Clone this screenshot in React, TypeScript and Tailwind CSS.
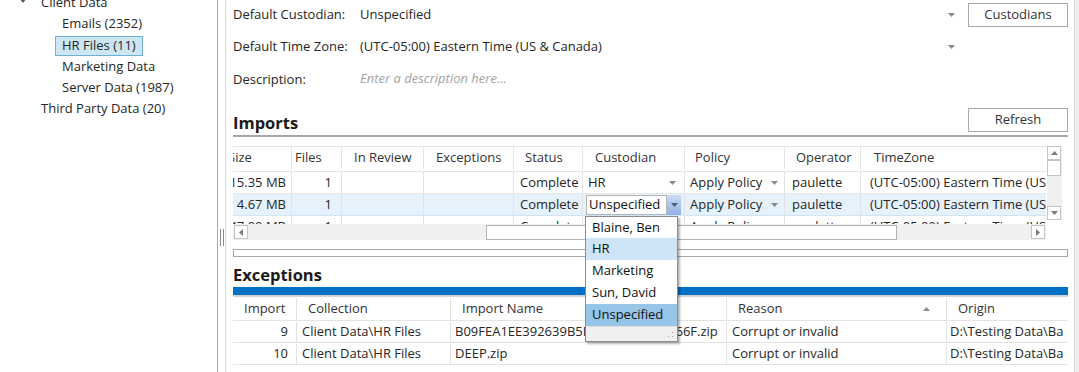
import React from 'react';
import clsx from 'clsx';

const Tri = ({ className = '' }: { className?: string }) => (
  <svg width="7" height="4" viewBox="0 0 7 4" className={className}>
    <polygon points="0,0 7,0 3.5,4" fill="currentColor" />
  </svg>
);

const TriUp = ({ className = '' }: { className?: string }) => (
  <svg width="7" height="4" viewBox="0 0 7 4" className={className}>
    <polygon points="0,4 7,4 3.5,0" fill="currentColor" />
  </svg>
);

const TriSide = ({ dir, className = '' }: { dir: 'l' | 'r'; className?: string }) => (
  <svg width="4" height="7" viewBox="0 0 4 7" className={className}>
    <polygon points={dir === 'l' ? '4,0 4,7 0,3.5' : '0,0 0,7 4,3.5'} fill="currentColor" />
  </svg>
);

const impCols = [
  { h: 'Size', w: 'w-[67px]', hp: 'pl-[3px]' },
  { h: 'Files', w: 'w-[50px]', hp: 'pl-[3px]' },
  { h: 'In Review', w: 'w-[82px]', hp: 'pl-[12px]' },
  { h: 'Exceptions', w: 'w-[90px]', hp: 'pl-[12px]' },
  { h: 'Status', w: 'w-[69px]', hp: 'pl-[11px]' },
  { h: 'Custodian', w: 'w-[102px]', hp: 'pl-[12px]' },
  { h: 'Policy', w: 'w-[100px]', hp: 'pl-[10px]' },
  { h: 'Operator', w: 'w-[76px]', hp: 'pl-[11px]' },
  { h: 'TimeZone', w: 'w-[260px]', hp: 'pl-[13px]' },
];

const excCols = [
  { h: 'Import', w: 'w-[64px]' },
  { h: 'Collection', w: 'w-[154px]' },
  { h: 'Import Name', w: 'w-[276px]' },
  { h: 'Reason', w: 'w-[220px]' },
  { h: 'Origin', w: 'w-[121px]' },
];

const Cell = ({ w, className, children }: { w: string; className?: string; children?: React.ReactNode }) => (
  <div className={clsx('h-full shrink-0 border-r border-[#e3e3e3] flex items-center whitespace-nowrap overflow-hidden', w, className)}>
    {children}
  </div>
);

function ImportRow({ size, sel, editing }: { size: string; sel?: boolean; editing?: boolean }) {
  return (
    <div className={clsx('flex h-[22px] border-b', sel ? 'bg-[#e5f1fb] border-[#cfe4f5]' : 'border-[#e6e6e6]')}>
      <Cell w="w-[67px]" className="justify-end pr-[5px]">{size}</Cell>
      <Cell w="w-[50px]" className="justify-end pr-[9px]">1</Cell>
      <Cell w="w-[82px]" />
      <Cell w="w-[90px]" />
      <Cell w="w-[69px]" className="pl-[6px]">Complete</Cell>
      {editing ? (
        <Cell w="w-[102px]" className="pl-[3px]">
          <div className="flex h-[20px] w-[95px]">
            <div className="flex-1 flex items-center bg-white border border-[#b4b4b4] pl-[2px] text-[#111]">Unspecified</div>
            <div className="w-[14px] flex items-center justify-center bg-gradient-to-b from-[#cddcf3] to-[#8fb0e2] text-[#4a5d7c]">
              <Tri />
            </div>
          </div>
        </Cell>
      ) : (
        <Cell w="w-[102px]" className="pl-[5px] pr-[8px] justify-between">
          <span>HR</span>
          <Tri className="text-[#8a8a8a]" />
        </Cell>
      )}
      <Cell w="w-[100px]" className="pl-[5px] pr-[6px] justify-between">
        <span>Apply Policy</span>
        <Tri className="text-[#8a8a8a]" />
      </Cell>
      <Cell w="w-[76px]" className="pl-[7px]">paulette</Cell>
      <Cell w="w-[260px]" className="pl-[9px]">(UTC-05:00) Eastern Time (US &amp; Canada)</Cell>
    </div>
  );
}

const ScrollBtn = ({ children }: { children: React.ReactNode }) => (
  <div className="w-[14px] h-[14px] border border-[#c4c4c4] bg-white flex items-center justify-center text-[#7a7a7a]">
    {children}
  </div>
);

export default function App() {
  return (
    <div
      className="relative w-[1079px] h-[372px] overflow-hidden bg-white flex text-[13px] text-[#262626]"
      style={{ fontFamily: '"Open Sans", "Noto Sans", sans-serif' }}
    >
      {/* tree */}
      <div className="w-[218px] shrink-0 border-r border-[#a8a8a8]">
        <div className="mt-[-8px] flex flex-col">
          <div className="h-[21px] flex items-center pl-[19px]">
            <svg width="8" height="5" viewBox="0 0 8 5" className="text-[#595959] mr-[14px] mt-[-4px]">
              <polygon points="0,0 8,0 4,5" fill="currentColor" />
            </svg>
            <span>Client Data</span>
          </div>
          <div className="h-[21px] flex items-center pl-[62px]">Emails (2352)</div>
          <div className="h-[22px] flex items-center pl-[55px] pt-[2px]">
            <div className="h-[20px] flex items-center px-[6px] bg-[#cde6f3] border border-[#6fafd9]">HR Files (11)</div>
          </div>
          <div className="h-[21px] flex items-center pl-[62px]">Marketing Data</div>
          <div className="h-[21px] flex items-center pl-[62px]">Server Data (1987)</div>
          <div className="h-[21px] flex items-center pl-[41px]">Third Party Data (20)</div>
        </div>
      </div>

      {/* splitter */}
      <div className="w-[7px] shrink-0 flex items-center justify-center">
        <div className="flex gap-[2px] mt-[102px]">
          <div className="w-px h-[17px] bg-[#8a8a8a]" />
          <div className="w-px h-[17px] bg-[#8a8a8a]" />
        </div>
      </div>

      {/* main */}
      <div className="w-[850px] shrink-0 border-l border-r border-[#d9d9d9] pl-[7px] pr-[6px] pt-[3px] flex flex-col">
        <div className="h-[24px] flex items-center">
          <div className="w-[127px] shrink-0">Default Custodian:</div>
          <div className="flex-1 flex items-center justify-between">
            <span>Unspecified</span>
            <Tri className="text-[#8a8a8a] mr-[5px]" />
          </div>
          <button className="ml-[8px] w-[100px] h-[24px] border border-[#a9a9a9] bg-white text-[#333]">Custodians</button>
        </div>
        <div className="mt-[8px] h-[24px] flex items-center">
          <div className="w-[127px] shrink-0">Default Time Zone:</div>
          <div className="flex-1 flex items-center justify-between">
            <span>(UTC-05:00) Eastern Time (US &amp; Canada)</span>
            <Tri className="text-[#8a8a8a] mr-[5px]" />
          </div>
          <div className="ml-[8px] w-[100px]" />
        </div>
        <div className="mt-[8px] h-[24px] flex items-center">
          <div className="w-[127px] shrink-0 pt-[2px]">Description:</div>
          <div className="italic text-[#a3a3a3]">Enter a description here...</div>
        </div>

        {/* imports */}
        <div className="mt-[17px] h-[29px] flex items-start justify-between border-b-2 border-[#a6a6a6]">
          <div className="pt-[4px] text-[16.5px] font-bold leading-[22px] text-[#1a1a1a]">Imports</div>
          <button className="w-[100px] h-[24px] border border-[#a9a9a9] bg-white text-[#333]">Refresh</button>
        </div>

        <div className="mt-[9px] mr-[6px] flex flex-col">
          <div className="flex h-[78px]">
            <div className="flex-1 overflow-hidden">
              <div className="ml-[-8px] flex h-[26px] pb-[2px] border-t border-b border-[#e3e3e3] text-[#333]">
                {impCols.map((c) => (
                  <Cell key={c.h} w={c.w} className={c.hp}>{c.h}</Cell>
                ))}
              </div>
              <div className="ml-[-8px]">
                <ImportRow size="15.35 MB" />
                <ImportRow size="4.67 MB" sel editing />
                <ImportRow size="47.09 MB" />
              </div>
            </div>
            <div className="w-[15px] ml-[1px] h-[74px] bg-[#f0f0f0] flex flex-col justify-between">
              <div className="flex flex-col">
                <ScrollBtn><TriUp /></ScrollBtn>
                <div className="w-[14px] h-[16px] border border-[#c4c4c4] bg-white" />
              </div>
              <ScrollBtn><Tri /></ScrollBtn>
            </div>
          </div>
          <div className="flex h-[16px]">
            <div className="flex-1 bg-[#f0f0f0] flex items-center px-px">
              <ScrollBtn><TriSide dir="l" /></ScrollBtn>
              <div className="ml-[238px] w-[411px] h-[15px] border border-[#b4b4b4] bg-white" />
              <div className="flex-1" />
              <ScrollBtn><TriSide dir="r" /></ScrollBtn>
            </div>
            <div className="w-[16px]" />
          </div>
        </div>

        <div className="mt-[9px] h-[8px] border border-[#a6a6a6]" />

        {/* exceptions */}
        <div className="mt-[7px] h-[22px] text-[16.5px] font-bold leading-[22px] text-[#1a1a1a]">Exceptions</div>
        <div className="mt-[1px] h-[8px] bg-[#0072c6]" />
        <div className="h-[2px] bg-[#d4d4d4]" />
        <div className="flex h-[24px] pt-px border-b border-[#e3e3e3] text-[#333]">
          {excCols.map((c) => (
            <Cell key={c.h} w={c.w} className={clsx('pl-[11px]', c.h === 'Reason' && 'justify-between pr-[16px]', c.h === 'Origin' && 'border-r-0')}>
              <span>{c.h}</span>
              {c.h === 'Reason' && <TriUp className="text-[#8a8a8a]" />}
            </Cell>
          ))}
        </div>
        {[
          ['9', 'B09FEA1EE392639B5D3C8A7E41F2B66F.zip'],
          ['10', 'DEEP.zip'],
        ].map(([n, name]) => (
          <div key={n} className="flex h-[22px] pt-px border-b border-[#e3e3e3]">
            <Cell w="w-[64px]" className="justify-end pr-[8px]">{n}</Cell>
            <Cell w="w-[154px]" className="pl-[5px]">Client Data\HR Files</Cell>
            <Cell w="w-[276px]" className="pl-[4px]">{name}</Cell>
            <Cell w="w-[220px]" className="pl-[5px]">Corrupt or invalid</Cell>
            <Cell w="w-[121px]" className="pl-[3px] border-r-0">D:\Testing Data\Ba</Cell>
          </div>
        ))}
      </div>

      <div className="flex-1 bg-[#f0f0f0]" />

      {/* custodian dropdown popup */}
      <div className="absolute left-[585px] top-[216px] w-[93px] border border-[#8c8c8c] bg-white shadow-[2px_2px_2px_rgba(0,0,0,0.3)] text-[#111]">
        <div className="h-[21px] flex items-center pl-[6px]">Blaine, Ben</div>
        <div className="h-[22px] flex items-center pl-[6px] bg-[#cde5f7]">HR</div>
        <div className="h-[22px] flex items-center pl-[6px]">Marketing</div>
        <div className="h-[22px] flex items-center pl-[6px]">Sun, David</div>
        <div className="h-[22px] flex items-center pl-[6px] bg-[#96c5e8]">Unspecified</div>
        <div className="h-[15px] bg-[#f0f0f0] border-t border-[#e0e0e0] flex items-end justify-end pr-[3px] pb-[3px]">
          <svg width="6" height="6" viewBox="0 0 6 6" className="text-[#9a9a9a]">
            <rect x="4" y="0" width="1" height="1" fill="currentColor" />
            <rect x="4" y="4" width="1" height="1" fill="currentColor" />
            <rect x="0" y="4" width="1" height="1" fill="currentColor" />
          </svg>
        </div>
      </div>
    </div>
  );
}
